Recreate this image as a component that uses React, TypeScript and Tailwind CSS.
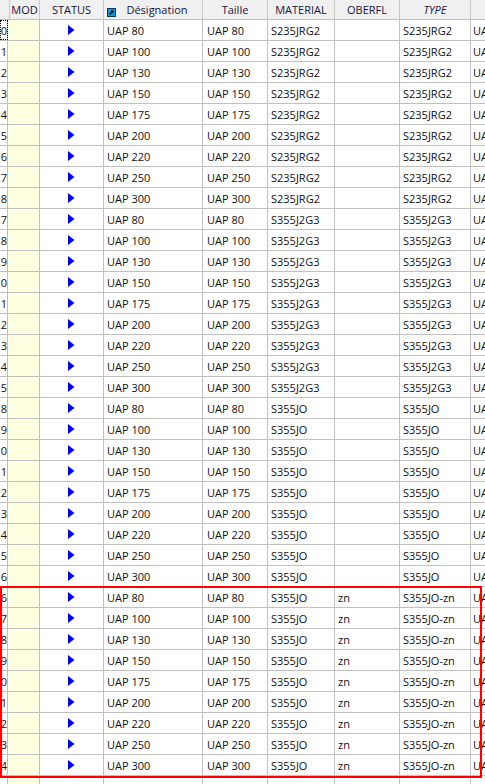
import React from "react";

const sizes = ["80", "100", "130", "150", "175", "200", "220", "250", "300"];
const groups = [
  { mat: "S235JRG2", ob: "", type: "S235JRG2" },
  { mat: "S355J2G3", ob: "", type: "S355J2G3" },
  { mat: "S355JO", ob: "", type: "S355JO" },
  { mat: "S355JO", ob: "zn", type: "S355JO-zn" },
];
const ids = [
  "0", "1", "2", "3", "4", "5", "6", "7", "8",
  "7", "8", "9", "0", "1", "2", "3", "4", "5",
  "8", "9", "0", "1", "2", "3", "4", "5", "6",
  "6", "7", "8", "9", "0", "1", "2", "3", "4",
];

type Row = { id: string; des: string; mat: string; ob: string; type: string };

const rows: Row[] = [];
groups.forEach((g) =>
  sizes.forEach((s) =>
    rows.push({ id: ids[rows.length], des: "UAP " + s, mat: g.mat, ob: g.ob, type: g.type })
  )
);

function Triangle() {
  return (
    <svg width="7" height="10" viewBox="0 0 7 10">
      <polygon points="0,0 6.5,5 0,10" fill="#0000ff" />
    </svg>
  );
}

function LinkIcon() {
  return (
    <svg width="9" height="9" viewBox="0 0 9 9" className="shrink-0">
      <rect x="0.5" y="0.5" width="8" height="8" fill="#0a9ad8" stroke="#0a3a6a" />
      <path d="M2.5 6.5 L6 3" stroke="#000" strokeWidth="1.3" />
      <path d="M3.6 2.6 L6.4 2.6 L6.4 5.4 Z" fill="#000" />
    </svg>
  );
}

function DataRow({ r, first }: { r: Row | null; first?: boolean }) {
  return (
    <div className="flex h-[21px] border-b border-[#c0c0c0] text-[#101010]">
      <div
        className={
          "w-[8px] shrink-0 overflow-hidden flex items-center justify-end border-r border-[#c0c0c0] " +
          (first ? "outline outline-1 outline-dotted outline-black -outline-offset-1" : "")
        }
      >
        <span className="shrink-0">{r ? r.id : ""}</span>
      </div>
      <div className="w-[32px] shrink-0 bg-[#ffffe1] border-r border-[#c0c0c0]" />
      <div className="w-[64px] shrink-0 flex items-center justify-center border-r border-[#c0c0c0]">
        {r ? <Triangle /> : null}
      </div>
      <div className="w-[99px] shrink-0 flex items-center pl-[3px] border-r border-[#c0c0c0] whitespace-nowrap overflow-hidden">
        {r ? r.des : ""}
      </div>
      <div className="w-[65px] shrink-0 flex items-center pl-[4px] border-r border-[#c0c0c0] whitespace-nowrap overflow-hidden">
        {r ? r.des : ""}
      </div>
      <div className="w-[67px] shrink-0 flex items-center pl-[3px] border-r border-[#c0c0c0] whitespace-nowrap overflow-hidden">
        {r ? r.mat : ""}
      </div>
      <div className="w-[65px] shrink-0 flex items-center pl-[3px] border-r border-[#c0c0c0] whitespace-nowrap overflow-hidden">
        {r ? r.ob : ""}
      </div>
      <div className="w-[71px] shrink-0 flex items-center pl-[3px] border-r border-[#c0c0c0] whitespace-nowrap overflow-hidden">
        {r ? r.type : ""}
      </div>
      <div className="w-[100px] shrink-0 flex items-center pl-[2px] whitespace-nowrap overflow-hidden">
        {r ? r.des : ""}
      </div>
    </div>
  );
}

export default function App() {
  const top = rows.slice(0, 27);
  const marked = rows.slice(27);
  return (
    <div
      className="w-[485px] h-[784px] overflow-hidden bg-white text-[11px] leading-none"
      style={{ fontFamily: '"Open Sans", "Noto Sans", sans-serif' }}
    >
      <div className="w-[600px]">
        <div className="flex h-[20px] bg-[#f0f0f0] border-b border-[#c0c0c0] text-[#14143c]">
          <div className="w-[10px] shrink-0 border-r border-[#c8c8c8]" />
          <div className="w-[30px] shrink-0 flex items-center justify-center border-r border-[#c8c8c8]">MOD</div>
          <div className="w-[64px] shrink-0 flex items-center justify-center border-r border-[#c8c8c8]">STATUS</div>
          <div className="w-[99px] shrink-0 flex items-center pl-[3px] border-r border-[#c8c8c8]">
            <div className="mt-[5px]">
              <LinkIcon />
            </div>
            <span className="flex-1 text-center pr-[4px]">Désignation</span>
          </div>
          <div className="w-[65px] shrink-0 flex items-center justify-center border-r border-[#c8c8c8]">Taille</div>
          <div className="w-[67px] shrink-0 flex items-center justify-center border-r border-[#c8c8c8]">MATERIAL</div>
          <div className="w-[65px] shrink-0 flex items-center justify-center border-r border-[#c8c8c8]">OBERFL</div>
          <div className="w-[71px] shrink-0 flex items-center justify-center border-r border-[#c8c8c8] italic">TYPE</div>
          <div className="w-[100px] shrink-0" />
        </div>
        {top.map((r, i) => (
          <DataRow key={i} r={r} first={i === 0} />
        ))}
        <div className="relative">
          {marked.map((r, i) => (
            <DataRow key={i} r={r} />
          ))}
          <div className="absolute left-0 top-[-1px] w-[482px] h-[192px] border-2 border-[#ff0000] pointer-events-none" />
        </div>
        <DataRow r={null} />
      </div>
    </div>
  );
}
